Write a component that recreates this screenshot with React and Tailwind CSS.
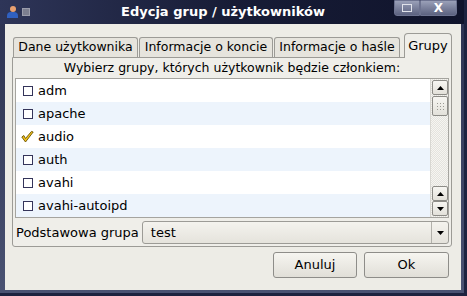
import React from 'react'

const groups = [
  { name: 'adm', on: false },
  { name: 'apache', on: false },
  { name: 'audio', on: true },
  { name: 'auth', on: false },
  { name: 'avahi', on: false },
  { name: 'avahi-autoipd', on: false },
]

function Check() {
  return (
    <svg width="14" height="14" viewBox="0 0 13 13">
      <path d="M0.8 6.5 L4.5 11.5 L12.2 1.5 L10.5 0.9 L4.5 8 L2.8 5 Z" fill="#f2c21c" stroke="#6a5200" strokeWidth="0.9" strokeLinejoin="round" />
    </svg>
  )
}

function Box() {
  return <div className="w-[10px] h-[10px] border border-[#34345a] bg-white" />
}

function Arrow({ up }) {
  return (
    <svg width="7" height="4" viewBox="0 0 7 4">
      <path d={up ? 'M0 4 L3.5 0 L7 4 Z' : 'M0 0 L3.5 4 L7 0 Z'} fill="#000" />
    </svg>
  )
}

function ScrollBtn({ up }) {
  return (
    <div className="h-[15px] w-[16px] border border-[#8d8c87] rounded-[2px] bg-gradient-to-b from-[#f7f6f2] to-[#e3e1da] flex items-center justify-center">
      <Arrow up={up} />
    </div>
  )
}

export default function App() {
  return (
    <div className="w-[467px] h-[296px] bg-[#1d2340] overflow-hidden" style={{ fontFamily: '"DejaVu Sans", Verdana, sans-serif' }}>
      <div className="w-[464px] h-[293px] bg-gradient-to-b from-[#2b3150] to-[#4a5272] flex flex-col">
        {/* title bar */}
        <div className="h-[24px] flex items-center bg-gradient-to-r from-[#2e3558] via-[#171c36] to-[#10142c] relative">
          <div className="ml-[7px] w-[11px] h-[13px] flex flex-col items-center">
            <div className="w-[6px] h-[6px] rounded-full bg-[#e8a070]" />
            <div className="w-[11px] h-[6px] rounded-t-[4px] bg-[#3060c0]" />
          </div>
          <div className="ml-[4px] w-[8px] h-[8px] bg-[#7c7f90] border border-[#9a9cab]" />
          <div className="flex-1 text-center text-white font-bold text-[13px] pr-[48px]">Edycja grup / użytkowników</div>
          <div className="absolute right-[7px] top-0 flex h-[16px]">
            <div className="w-[26px] h-[16px] border border-[#6d7390] bg-gradient-to-b from-[#9aa0b8] to-[#5c6280] rounded-bl-[3px] flex items-center justify-center">
              <div className="w-[10px] h-[8px] border border-[#e0e2ea]" />
            </div>
            <div className="w-[37px] h-[16px] border border-[#6d7390] bg-gradient-to-b from-[#9aa0b8] to-[#5c6280] rounded-br-[3px] flex items-center justify-center text-white font-bold text-[12px] leading-none">X</div>
          </div>
        </div>
        {/* content */}
        <div className="ml-[5px] w-[456px] h-[266px] bg-[#edece6] flex flex-col text-[12px] text-black">
          <div className="ml-[7px] mt-[9px] w-[440px]">
            {/* tabs */}
            <div className="flex items-end h-[24px] relative z-10">
              <div className="ml-[1px] w-[125px] h-[20px] border border-b-0 border-[#9c9b96] rounded-t-[3px] bg-[#e6e4dd] flex items-center justify-center text-[12.5px]">Dane użytkownika</div>
              <div className="ml-[1px] w-[134px] h-[20px] border border-b-0 border-[#9c9b96] rounded-t-[3px] bg-[#e6e4dd] flex items-center justify-center text-[12.5px]">Informacje o koncie</div>
              <div className="ml-[1px] w-[126px] h-[20px] border border-b-0 border-[#9c9b96] rounded-t-[3px] bg-[#e6e4dd] flex items-center justify-center text-[12.5px]">Informacje o haśle</div>
              <div className="ml-[4px] w-[48px] h-[25px] -mb-[1px] border border-b-0 border-[#9c9b96] rounded-t-[4px] bg-[#efeee9] flex items-center justify-center text-[13px]">Grupy</div>
            </div>
            {/* panel */}
            <div className="h-[190px] border border-[#9c9b96] rounded-b-[3px] bg-[#efeee9] flex flex-col px-[2px]">
              <div className="h-[20px] flex items-center justify-center text-[12.5px]">Wybierz grupy, których użytkownik będzie członkiem:</div>
              <div className="h-[140px] border border-[#a5a49f] bg-white flex">
                <div className="flex-1 flex flex-col">
                  {groups.map((g, i) => (
                    <div key={g.name} className={`h-[23px] flex items-center pl-[5px] text-[13px] ${i % 2 ? 'bg-[#edf4fc]' : 'bg-white'}`}>
                      <div className="w-[13px] flex justify-center">{g.on ? <Check /> : <Box />}</div>
                      <span className="ml-[4px]">{g.name}</span>
                    </div>
                  ))}
                </div>
                <div className="w-[18px] bg-[repeating-conic-gradient(#e4e3de_0%_25%,#f6f5f1_0%_50%)] bg-[length:2px_2px] flex flex-col py-[1px] pl-[1px] border-l border-[#d8d7d2]">
                  <ScrollBtn up />
                  <div className="mt-[1px] h-[20px] w-[16px] border border-[#8d8c87] rounded-[2px] bg-gradient-to-b from-[#f7f6f2] to-[#e3e1da] flex items-center justify-center">
                    <div className="grid grid-cols-3 gap-[2px]">
                      {Array.from({ length: 9 }).map((_, k) => (
                        <div key={k} className="w-[1px] h-[1px] bg-[#9a9993]" />
                      ))}
                    </div>
                  </div>
                  <div className="flex-1" />
                  <ScrollBtn up />
                  <ScrollBtn />
                </div>
              </div>
              <div className="mt-[3px] flex items-center">
                <span className="ml-[1px] text-[13px]">Podstawowa grupa</span>
                <div className="ml-[3px] flex-1 h-[23px] border border-[#9c9b96] rounded-[3px] bg-gradient-to-b from-[#f4f3ee] to-[#e5e3dc] flex items-center">
                  <span className="flex-1 pl-[8px] text-[13px]">test</span>
                  <div className="w-[17px] h-full border-l border-[#b2b1ab] flex items-center justify-center">
                    <Arrow />
                  </div>
                </div>
              </div>
            </div>
          </div>
          {/* buttons */}
          <div className="mt-[5px] flex justify-end gap-[7px] pr-[12px]">
            <button className="w-[84px] h-[26px] border border-[#8e8d89] rounded-[3px] bg-gradient-to-b from-[#f6f5f0] to-[#e1dfd8] text-[13px]">Anuluj</button>
            <button className="w-[85px] h-[26px] border border-[#8e8d89] rounded-[3px] bg-gradient-to-b from-[#f6f5f0] to-[#e1dfd8] text-[13px]">Ok</button>
          </div>
        </div>
      </div>
    </div>
  )
}
